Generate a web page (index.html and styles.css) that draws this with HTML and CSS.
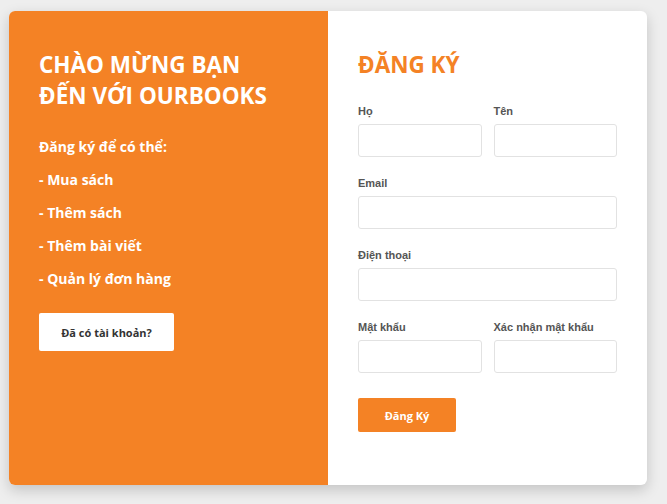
FILE: index.html
```html
<!DOCTYPE html>
<html lang="vi">
<head>
<meta charset="utf-8">
<link rel="stylesheet" href="styles.css">
</head>
<body>
<div class="page">
  <div class="card">
    <div class="intro">
      <h1 class="intro-title">CHÀO MỪNG BẠN<br>ĐẾN VỚI OURBOOKS</h1>
      <ul class="perks">
        <li>Đăng ký để có thể:</li>
        <li>- Mua sách</li>
        <li>- Thêm sách</li>
        <li>- Thêm bài viết</li>
        <li>- Quản lý đơn hàng</li>
      </ul>
      <button class="btn-login" type="button">Đã có tài khoản?</button>
    </div>
    <form class="signup">
      <h2 class="signup-title">ĐĂNG KÝ</h2>
      <div class="row">
        <div class="field"><label>Họ</label><input type="text"></div>
        <div class="field"><label>Tên</label><input type="text"></div>
      </div>
      <div class="row">
        <div class="field"><label>Email</label><input type="text"></div>
      </div>
      <div class="row">
        <div class="field"><label>Điện thoại</label><input type="text"></div>
      </div>
      <div class="row">
        <div class="field"><label>Mật khẩu</label><input type="password"></div>
        <div class="field"><label>Xác nhận mật khẩu</label><input type="password"></div>
      </div>
      <button class="btn-submit" type="button">Đăng Ký</button>
    </form>
  </div>
</div>
</body>
</html>
```

FILE: styles.css
```css
* { box-sizing: border-box; }
html, body { margin: 0; padding: 0; }
body {
  background: #eeeeee;
  font-family: "Open Sans", "Liberation Sans", sans-serif;
}
.page {
  padding: 11px 20px 19px 9px;
}
.card {
  display: flex;
  width: 638px;
  height: 474px;
  background: #ffffff;
  border-radius: 6px;
  overflow: hidden;
  box-shadow: 0 5px 14px rgba(0,0,0,0.18);
}
.intro {
  flex: 0 0 319px;
  width: 319px;
  background: #f48225;
  color: #ffffff;
  padding: 38px 30px 0 30px;
}
.intro-title {
  margin: 0;
  font-size: 22.5px;
  line-height: 31px;
  font-weight: 700;
}
.perks {
  list-style: none;
  margin: 26px 0 0 0;
  padding: 0;
  font-size: 14px;
  font-weight: 700;
}
.perks li {
  line-height: 19px;
  margin-bottom: 14px;
}
.btn-login {
  margin-top: 11px;
  width: 135px;
  height: 38px;
  border: 0;
  border-radius: 2px;
  background: #ffffff;
  color: #333333;
  font-family: "Open Sans", sans-serif;
  font-weight: 700;
  font-size: 11px;
  padding: 0;
}
.signup {
  flex: 1;
  padding: 38px 30px 0 30px;
}
.signup-title {
  margin: 0 0 24px 0;
  color: #f48225;
  font-size: 22.5px;
  line-height: 32px;
  font-weight: 700;
}
.row {
  display: flex;
  gap: 12px;
  margin-bottom: 20px;
}
.field {
  flex: 1;
  min-width: 0;
  display: flex;
  flex-direction: column;
}
.field label {
  font-family: "Liberation Sans", Arial, sans-serif;
  font-size: 11px;
  line-height: 13px;
  font-weight: 700;
  color: #555555;
  margin-bottom: 6px;
}
.field input {
  width: 100%;
  height: 33px;
  border: 1px solid #e2e2e2;
  border-radius: 3px;
  background: #ffffff;
  outline: none;
}
.btn-submit {
  margin-top: 5px;
  width: 98px;
  height: 34px;
  border: 0;
  border-radius: 2px;
  background: #f48225;
  color: #ffffff;
  font-family: "Open Sans", sans-serif;
  font-weight: 700;
  font-size: 11px;
  padding: 0;
}
```
